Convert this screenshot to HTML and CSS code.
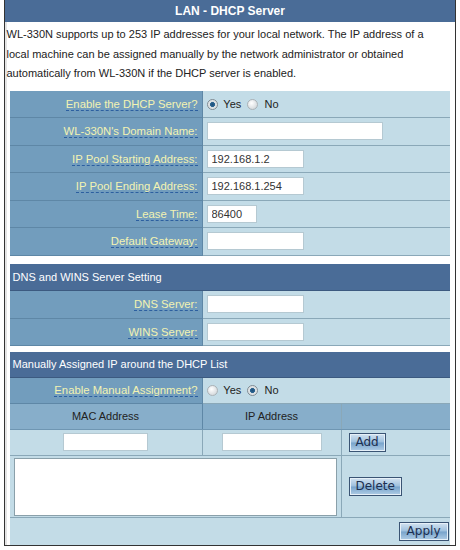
FILE: index.html
```html
<!DOCTYPE html>
<html lang="en">

<head>
  <meta charset="UTF-8">
  <title>LAN - DHCP Server</title>
  <link rel="stylesheet" href="styles.css">
</head>

<body>
  <div class='frame'>
    <div class='title'>LAN - DHCP Server</div>
    <p class='desc'>
      WL-330N supports up to 253 IP addresses for your local network. The IP address of a<br>
      local machine can be assigned manually by the network administrator or obtained<br>
      automatically from WL-330N if the DHCP server is enabled.
    </p>

    <table class='form'>
      <tr>
        <th><span class='hint'>Enable the DHCP Server?</span></th>
        <td><label><input type='radio' name='dhcp' checked> Yes</label> <label><input type='radio' name='dhcp'> No</label></td>
      </tr>
      <tr>
        <th><span class='hint'>WL-330N's Domain Name:</span></th>
        <td><input type='text' class='long'></td>
      </tr>
      <tr>
        <th><span class='hint'>IP Pool Starting Address:</span></th>
        <td><input type='text' class='mid' value='192.168.1.2'></td>
      </tr>
      <tr>
        <th><span class='hint'>IP Pool Ending Address:</span></th>
        <td><input type='text' class='mid' value='192.168.1.254'></td>
      </tr>
      <tr>
        <th><span class='hint'>Lease Time:</span></th>
        <td><input type='text' class='short' value='86400'></td>
      </tr>
      <tr>
        <th><span class='hint'>Default Gateway:</span></th>
        <td><input type='text' class='mid'></td>
      </tr>
    </table>

    <table class='form dns'>
      <tr><td colspan='2' class='section'>DNS and WINS Server Setting</td></tr>
      <tr>
        <th><span class='hint'>DNS Server:</span></th>
        <td><input type='text' class='mid'></td>
      </tr>
      <tr>
        <th><span class='hint'>WINS Server:</span></th>
        <td><input type='text' class='mid'></td>
      </tr>
    </table>

    <table class='form last'>
      <tr class='tight'><td colspan='3' class='section'>Manually Assigned IP around the DHCP List</td></tr>
      <tr class='tight'>
        <th><span class='hint'>Enable Manual Assignment?</span></th>
        <td colspan='2'><label><input type='radio' name='manual'> Yes</label> <label><input type='radio' name='manual' checked> No</label></td>
      </tr>
      <tr class='colhead tight'>
        <td>MAC Address</td>
        <td class='ipcol'>IP Address</td>
        <td class='btncol'></td>
      </tr>
      <tr class='entry tight'>
        <td class='center'><input type='text' class='mac'></td>
        <td class='center ipcol'><input type='text' class='ip'></td>
        <td class='btncol'><button class='btn'>Add</button></td>
      </tr>
      <tr class='list'>
        <td colspan='2'><textarea></textarea></td>
        <td class='btncol'><button class='btn'>Delete</button></td>
      </tr>
      <tr class='foot'>
        <td colspan='3'><button class='btn'>Apply</button></td>
      </tr>
    </table>
  </div>
</body>
</html>
```

FILE: styles.css
```css
body {
  margin: 0;
  background: #fff;
  font-family: "Liberation Sans", Arial, sans-serif;
  font-size: 11px;
  color: #222;
}
.frame {
  margin-left: 4px;
  width: 452px;
  border: 1.5px solid #333;
  border-top: none;
  box-sizing: border-box;
  padding: 0 4.5px;
  box-shadow: inset 2px 0 0 #e4e4e4;
}
.title {
  margin: 0 -4.5px;
  height: 22px;
  line-height: 22px;
  background: #4a6c97;
  color: #fff;
  font-weight: bold;
  font-size: 12px;
  text-align: center;
}
.desc {
  margin: 0 -3px;
  padding: 3px 0 7px 0;
  line-height: 19.5px;
  font-size: 11px;
  color: #222;
}
.form {
  width: 440px;
  border-collapse: collapse;
  margin-bottom: 8px;
}
.form.dns { margin-bottom: 6px; }
.form th, .form td {
  height: 26px;
  padding: 0 4px;
  border-bottom: 1px solid #8aa8b8;
  background: #c3dce7;
  text-align: left;
  font-weight: normal;
}
.form tr:nth-child(even) th, .form tr:nth-child(even) td { height: 27px; }
.form tr.tight th, .form tr.tight td { height: 25px; }
.form th {
  width: 184px;
  background: #729dbd;
  text-align: right;
  border-bottom-color: #5e87a6;
  border-right: 1px solid #5e87a6;
}
.hint {
  color: #f3f3b2;
  border-bottom: 1px dashed #2c5fa0;
  font-size: 11.3px;
}
.form td.section {
  background: #4a6c97;
  color: #fff;
  border-bottom-color: #3c5a80;
  font-size: 11px;
  padding-left: 3px;
}
.form label input {
  -webkit-appearance: none;
  appearance: none;
  margin: 0 3px 0 0;
  vertical-align: -2px;
  width: 11px;
  height: 11px;
  border-radius: 50%;
  border: 1px solid #a9b1b6;
  background: radial-gradient(circle at 40% 35%, #ffffff, #d9dde0 70%);
  box-sizing: border-box;
}
.form label input:checked {
  border-color: #7e8a92;
  background: radial-gradient(circle, #1e4f7a 0, #2b6390 2.2px, #d8dde0 2.8px, #eef0f1 100%);
}
.form label + label { margin-left: 3px; }
input[type=text] {
  height: 18px;
  border: 1px solid #b5c9d2;
  box-sizing: border-box;
  padding: 0 4px;
  font-family: "Liberation Sans", Arial, sans-serif;
  font-size: 11px;
  color: #333;
  background: #fff;
}
.long { width: 176px; }
.mid { width: 97px; }
.short { width: 50px; }
.mac { width: 85px; }
.ip { width: 100px; }
.colhead td {
  background: #87aeca;
  text-align: center;
  color: #222;
  border-right: 1px solid #5e87a6;
  border-bottom-color: #6f96b2;
}
.colhead td:first-child { width: 184px; }
.colhead td.btncol { border-right: none; }
.form td.center { text-align: center; }
.form td.ipcol { width: 130px; border-right: 1px solid #8aa8b8; }
.entry td:first-child { border-right: 1px solid #8aa8b8; }
.form td.btncol { padding-left: 7px; }
.form .list td { height: 61px; }
.list td:first-child { padding: 0 3px 0 4px; border-right: 1px solid #8aa8b8; }
textarea {
  display: block;
  width: 323px;
  height: 58px;
  box-sizing: border-box;
  border: 1px solid #8aa0aa;
  resize: none;
  background: #fff;
  margin-top: 1px;
}
.form .foot td {
  height: 27px;
  text-align: right;
  border-bottom: none;
}
.form.last { margin-bottom: 0; }
.btn {
  font-family: "DejaVu Sans", Verdana, sans-serif;
  font-size: 12px;
  line-height: 14px;
  color: #1d2f50;
  padding: 1px 6px;
  height: 19px;
  border: 1px solid #3a5474;
  border-radius: 0;
  background: linear-gradient(#d3e3f1, #9dbfdd 48%, #77a3cb 52%, #b0cde6);
  box-shadow: inset 0 0 0 1px #e6f0f8;
  cursor: pointer;
}
.foot .btn { margin-right: -3px; padding: 1px 7px; }
```
